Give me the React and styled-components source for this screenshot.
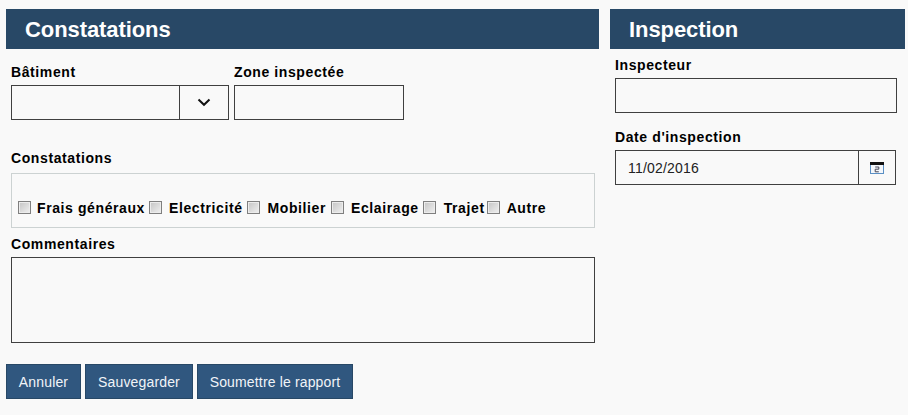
import React from 'react';
import styled, { createGlobalStyle } from 'styled-components';

const GlobalStyle = createGlobalStyle`
  html, body {
    margin: 0;
    background: #f9f9f9;
  }
  * {
    box-sizing: border-box;
  }
`;

const Page = styled.div`
  display: flex;
  gap: 11px;
  width: 908px;
  height: 415px;
  padding: 9px 3px 0 6px;
  font-family: 'Liberation Sans', Arial, sans-serif;
  color: #000;
`;

const Column = styled.div`
  flex: ${(props) => (props.$wide ? '0 0 593px' : '0 0 295px')};
`;

const Title = styled.h2`
  margin: 0;
  height: 40px;
  padding-left: 19px;
  background: #284866;
  color: #fff;
  font-size: 22px;
  line-height: 41px;
  font-weight: bold;
  letter-spacing: -0.08px;
`;

const Label = styled.label`
  display: block;
  font-size: 14px;
  line-height: 16px;
  font-weight: bold;
  letter-spacing: 0.6px;
`;

const TopRow = styled.div`
  display: flex;
  gap: 5px;
  margin: 15px 0 0 5px;
`;

const Field = styled.div`
  display: flex;
  flex-direction: column;
  gap: 5px;
`;

const Box = styled.div`
  display: flex;
  width: ${(props) => props.$width}px;
  height: 35px;
  border: 1px solid #404040;
`;

const BoxValue = styled.div`
  flex: 1;
  padding-left: 12px;
  font-size: 14px;
  line-height: 35px;
  letter-spacing: 0.2px;
  color: #222;
`;

const BoxAddon = styled.div`
  flex: 0 0 ${(props) => props.$width}px;
  display: flex;
  align-items: center;
  justify-content: center;
  border-left: 1px solid #404040;
`;

const Section = styled.div`
  margin: ${(props) => props.$margin};
`;

const CheckPanel = styled.div`
  display: flex;
  align-items: center;
  height: 55px;
  margin-top: 7px;
  padding: 14px 0 0 6px;
  border: 1px solid #ccd2d2;
`;

const CheckItem = styled.label`
  display: flex;
  align-items: center;
  font-size: 14px;
  font-weight: bold;
  letter-spacing: 0.6px;
  margin-right: ${(props) => props.$gap}px;
`;

const FakeCheck = styled.span`
  width: 13px;
  height: 13px;
  margin-right: ${(props) => props.$gap}px;
  border: 1px solid #7f7f7f;
  background: linear-gradient(135deg, #c4c4c4, #f0f0f0);
  box-shadow: inset 0 0 0 1px #ececec;
`;

const TextBlock = styled.div`
  height: 86px;
  margin-top: 5px;
  border: 1px solid #404040;
`;

const Actions = styled.div`
  display: flex;
  gap: 4px;
  margin-top: 21px;
`;

const Button = styled.button`
  width: ${(props) => props.$width}px;
  height: 35px;
  padding: 0;
  background: #30577f;
  border: 1px solid #284866;
  color: #f0f4f8;
  font-family: inherit;
  font-size: 14px;
  letter-spacing: 0.15px;
`;

const InspectorBox = styled(Box)`
  margin-top: 5px;
`;

const checks = [
  { text: 'Frais généraux', box: 6, after: 4 },
  { text: 'Electricité', box: 7, after: 4 },
  { text: 'Mobilier', box: 8, after: 5 },
  { text: 'Eclairage', box: 7, after: 4 },
  { text: 'Trajet', box: 8, after: 2 },
  { text: 'Autre', box: 7, after: 0 },
];

const Chevron = () => (
  <svg width="14" height="9" viewBox="0 0 14 9">
    <path d="M1.5 1.5 L7 6.8 L12.5 1.5" fill="none" stroke="#111" strokeWidth="2" />
  </svg>
);

const CalendarIcon = () => (
  <svg width="14" height="12" viewBox="0 0 14 12">
    <rect x="0.5" y="0.5" width="13" height="11" fill="#f4f7fb" stroke="#5a8fc4" />
    <rect x="0" y="0" width="14" height="3" fill="#111" />
    <path d="M5.2 5 H8.8 V7.2 H5.2 V9.8 H8.8" fill="none" stroke="#445" strokeWidth="1" />
  </svg>
);

export default function App() {
  return (
    <Page>
      <GlobalStyle />
      <Column $wide>
        <Title>Constatations</Title>
        <TopRow>
          <Field>
            <Label>Bâtiment</Label>
            <Box $width={218}>
              <BoxValue />
              <BoxAddon $width={49}>
                <Chevron />
              </BoxAddon>
            </Box>
          </Field>
          <Field>
            <Label>Zone inspectée</Label>
            <Box $width={170} />
          </Field>
        </TopRow>
        <Section $margin="30px 4px 0 5px">
          <Label>Constatations</Label>
          <CheckPanel>
            {checks.map((item) => (
              <CheckItem key={item.text} $gap={item.after}>
                <FakeCheck $gap={item.box} />
                {item.text}
              </CheckItem>
            ))}
          </CheckPanel>
        </Section>
        <Section $margin="8px 4px 0 5px">
          <Label>Commentaires</Label>
          <TextBlock />
        </Section>
        <Actions>
          <Button $width={75}>Annuler</Button>
          <Button $width={108}>Sauvegarder</Button>
          <Button $width={156}>Soumettre le rapport</Button>
        </Actions>
      </Column>
      <Column>
        <Title>Inspection</Title>
        <Section $margin="8px 8px 0 5px">
          <Label>Inspecteur</Label>
          <InspectorBox $width={282} />
        </Section>
        <Section $margin="16px 9px 0 5px">
          <Label>Date d'inspection</Label>
          <InspectorBox $width={281}>
            <BoxValue>11/02/2016</BoxValue>
            <BoxAddon $width={37}>
              <CalendarIcon />
            </BoxAddon>
          </InspectorBox>
        </Section>
      </Column>
    </Page>
  );
}
